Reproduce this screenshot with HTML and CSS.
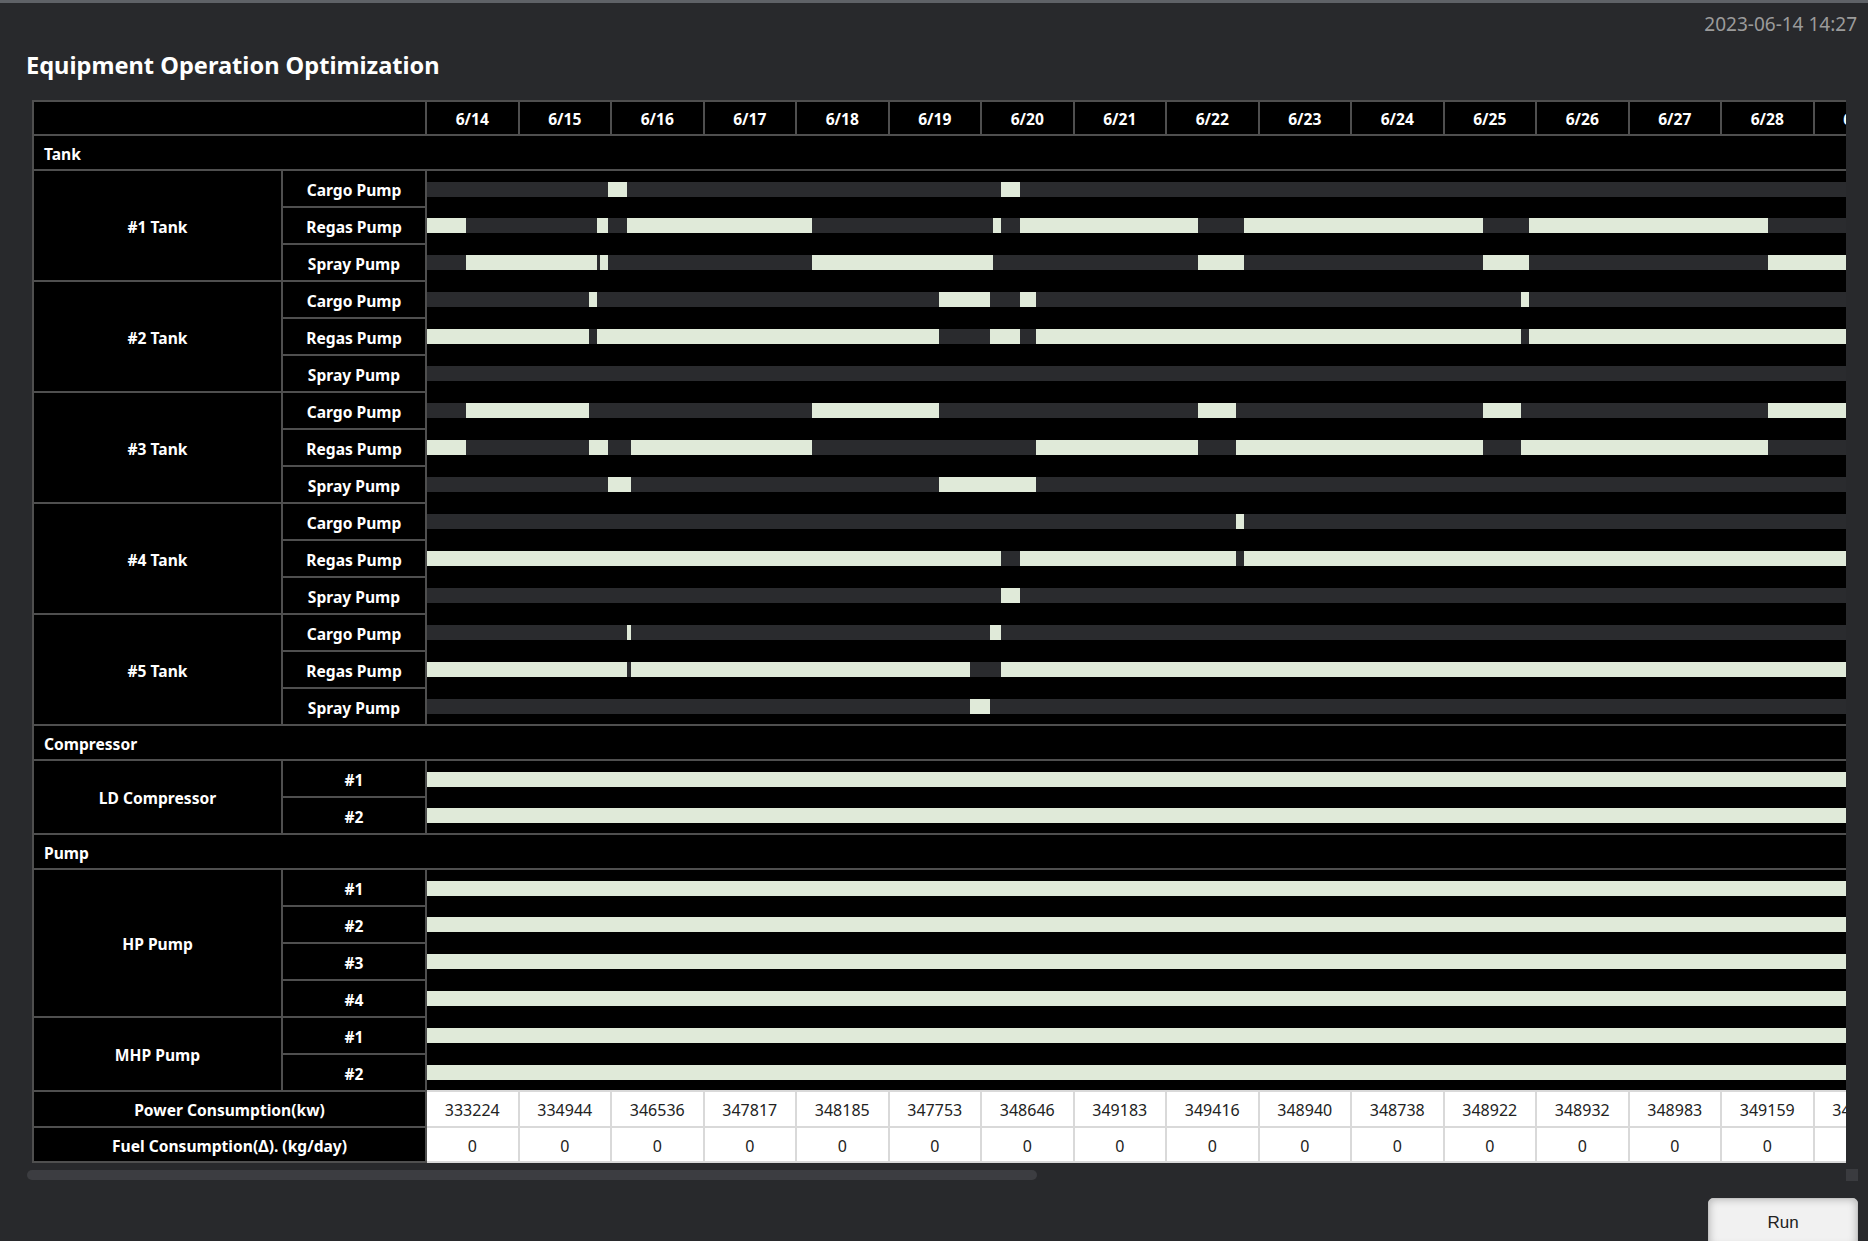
FILE: index.html
```html
<!DOCTYPE html>
<html lang="en">
<head>
<meta charset="utf-8">
<title>Equipment Operation Optimization</title>
<link rel="stylesheet" href="styles.css">
</head>
<body>
<div class="topbar"><span class="stamp">2023-06-14 14:27</span></div>
<h1 class="title">Equipment Operation Optimization</h1>
<div class="scroll">
<table class="grid">
<colgroup>
<col class="c-grp"><col class="c-sub">
<col class="c-day"><col class="c-day"><col class="c-day"><col class="c-day"><col class="c-day"><col class="c-day"><col class="c-day"><col class="c-day"><col class="c-day"><col class="c-day"><col class="c-day"><col class="c-day"><col class="c-day"><col class="c-day"><col class="c-day"><col class="c-day"><col class="c-day"><col class="c-day"><col class="c-day"><col class="c-day"><col class="c-day"><col class="c-day"><col class="c-day"><col class="c-day"><col class="c-day"><col class="c-day"><col class="c-day"><col class="c-day"><col class="c-day"><col class="c-day"><col class="c-day">
</colgroup>
<thead>
<tr class="r-head">
<th colspan="2"></th>
<th>6/14</th><th>6/15</th><th>6/16</th><th>6/17</th><th>6/18</th><th>6/19</th><th>6/20</th><th>6/21</th><th>6/22</th><th>6/23</th><th>6/24</th><th>6/25</th><th>6/26</th><th>6/27</th><th>6/28</th><th>6/29</th><th>6/30</th><th>7/1</th><th>7/2</th><th>7/3</th><th>7/4</th><th>7/5</th><th>7/6</th><th>7/7</th><th>7/8</th><th>7/9</th><th>7/10</th><th>7/11</th><th>7/12</th><th>7/13</th><th>7/14</th>
</tr>
</thead>
<tbody>
<tr class="r-sec"><th class="sec" colspan="33">Tank</th></tr>

<tr class="r-item">
<th class="grp" rowspan="3">#1 Tank</th><th class="sub">Cargo Pump</th>
<td class="tl" colspan="31"><div class="track"><span class="s" style="flex:47"></span><span class="s on" style="flex:5"></span><span class="s" style="flex:97"></span><span class="s on" style="flex:5"></span><span class="s" style="flex:590"></span></div></td>
</tr>
<tr class="r-item">
<th class="sub">Regas Pump</th>
<td class="tl" colspan="31"><div class="track"><span class="s on" style="flex:10"></span><span class="s" style="flex:34"></span><span class="s on" style="flex:3"></span><span class="s" style="flex:5"></span><span class="s on" style="flex:48"></span><span class="s" style="flex:47"></span><span class="s on" style="flex:2"></span><span class="s" style="flex:5"></span><span class="s on" style="flex:46"></span><span class="s" style="flex:12"></span><span class="s on" style="flex:62"></span><span class="s" style="flex:12"></span><span class="s on" style="flex:62"></span><span class="s" style="flex:24"></span><span class="s on" style="flex:62"></span><span class="s" style="flex:12"></span><span class="s on" style="flex:298"></span></div></td>
</tr>
<tr class="r-item">
<th class="sub">Spray Pump</th>
<td class="tl" colspan="31"><div class="track"><span class="s" style="flex:10"></span><span class="s on" style="flex:34"></span><span class="s" style="flex:1"></span><span class="s on" style="flex:2"></span><span class="s" style="flex:53"></span><span class="s on" style="flex:47"></span><span class="s" style="flex:53"></span><span class="s on" style="flex:12"></span><span class="s" style="flex:62"></span><span class="s on" style="flex:12"></span><span class="s" style="flex:62"></span><span class="s on" style="flex:24"></span><span class="s" style="flex:62"></span><span class="s on" style="flex:12"></span><span class="s" style="flex:298"></span></div></td>
</tr>

<tr class="r-item">
<th class="grp" rowspan="3">#2 Tank</th><th class="sub">Cargo Pump</th>
<td class="tl" colspan="31"><div class="track"><span class="s" style="flex:42"></span><span class="s on" style="flex:2"></span><span class="s" style="flex:89"></span><span class="s on" style="flex:13"></span><span class="s" style="flex:8"></span><span class="s on" style="flex:4"></span><span class="s" style="flex:126"></span><span class="s on" style="flex:2"></span><span class="s" style="flex:458"></span></div></td>
</tr>
<tr class="r-item">
<th class="sub">Regas Pump</th>
<td class="tl" colspan="31"><div class="track"><span class="s on" style="flex:42"></span><span class="s" style="flex:2"></span><span class="s on" style="flex:89"></span><span class="s" style="flex:13"></span><span class="s on" style="flex:8"></span><span class="s" style="flex:4"></span><span class="s on" style="flex:126"></span><span class="s" style="flex:2"></span><span class="s on" style="flex:458"></span></div></td>
</tr>
<tr class="r-item">
<th class="sub">Spray Pump</th>
<td class="tl" colspan="31"><div class="track"><span class="s" style="flex:744"></span></div></td>
</tr>

<tr class="r-item">
<th class="grp" rowspan="3">#3 Tank</th><th class="sub">Cargo Pump</th>
<td class="tl" colspan="31"><div class="track"><span class="s" style="flex:10"></span><span class="s on" style="flex:32"></span><span class="s" style="flex:58"></span><span class="s on" style="flex:33"></span><span class="s" style="flex:67"></span><span class="s on" style="flex:10"></span><span class="s" style="flex:64"></span><span class="s on" style="flex:10"></span><span class="s" style="flex:64"></span><span class="s on" style="flex:24"></span><span class="s" style="flex:62"></span><span class="s on" style="flex:12"></span><span class="s" style="flex:298"></span></div></td>
</tr>
<tr class="r-item">
<th class="sub">Regas Pump</th>
<td class="tl" colspan="31"><div class="track"><span class="s on" style="flex:10"></span><span class="s" style="flex:32"></span><span class="s on" style="flex:5"></span><span class="s" style="flex:6"></span><span class="s on" style="flex:47"></span><span class="s" style="flex:58"></span><span class="s on" style="flex:42"></span><span class="s" style="flex:10"></span><span class="s on" style="flex:64"></span><span class="s" style="flex:10"></span><span class="s on" style="flex:64"></span><span class="s" style="flex:24"></span><span class="s on" style="flex:62"></span><span class="s" style="flex:12"></span><span class="s on" style="flex:298"></span></div></td>
</tr>
<tr class="r-item">
<th class="sub">Spray Pump</th>
<td class="tl" colspan="31"><div class="track"><span class="s" style="flex:47"></span><span class="s on" style="flex:6"></span><span class="s" style="flex:80"></span><span class="s on" style="flex:25"></span><span class="s" style="flex:586"></span></div></td>
</tr>

<tr class="r-item">
<th class="grp" rowspan="3">#4 Tank</th><th class="sub">Cargo Pump</th>
<td class="tl" colspan="31"><div class="track"><span class="s" style="flex:210"></span><span class="s on" style="flex:2"></span><span class="s" style="flex:532"></span></div></td>
</tr>
<tr class="r-item">
<th class="sub">Regas Pump</th>
<td class="tl" colspan="31"><div class="track"><span class="s on" style="flex:149"></span><span class="s" style="flex:5"></span><span class="s on" style="flex:56"></span><span class="s" style="flex:2"></span><span class="s on" style="flex:532"></span></div></td>
</tr>
<tr class="r-item">
<th class="sub">Spray Pump</th>
<td class="tl" colspan="31"><div class="track"><span class="s" style="flex:149"></span><span class="s on" style="flex:5"></span><span class="s" style="flex:590"></span></div></td>
</tr>

<tr class="r-item">
<th class="grp" rowspan="3">#5 Tank</th><th class="sub">Cargo Pump</th>
<td class="tl" colspan="31"><div class="track"><span class="s" style="flex:52"></span><span class="s on" style="flex:1"></span><span class="s" style="flex:93"></span><span class="s on" style="flex:3"></span><span class="s" style="flex:595"></span></div></td>
</tr>
<tr class="r-item">
<th class="sub">Regas Pump</th>
<td class="tl" colspan="31"><div class="track"><span class="s on" style="flex:52"></span><span class="s" style="flex:1"></span><span class="s on" style="flex:88"></span><span class="s" style="flex:8"></span><span class="s on" style="flex:595"></span></div></td>
</tr>
<tr class="r-item">
<th class="sub">Spray Pump</th>
<td class="tl" colspan="31"><div class="track"><span class="s" style="flex:141"></span><span class="s on" style="flex:5"></span><span class="s" style="flex:598"></span></div></td>
</tr>

<tr class="r-sec"><th class="sec" colspan="33">Compressor</th></tr>
<tr class="r-item">
<th class="grp" rowspan="2">LD Compressor</th><th class="sub">#1</th>
<td class="tl" colspan="31"><div class="track full"></div></td>
</tr>
<tr class="r-item">
<th class="sub">#2</th>
<td class="tl" colspan="31"><div class="track full"></div></td>
</tr>

<tr class="r-sec"><th class="sec" colspan="33">Pump</th></tr>
<tr class="r-item">
<th class="grp" rowspan="4">HP Pump</th><th class="sub">#1</th>
<td class="tl" colspan="31"><div class="track full"></div></td>
</tr>
<tr class="r-item">
<th class="sub">#2</th>
<td class="tl" colspan="31"><div class="track full"></div></td>
</tr>
<tr class="r-item">
<th class="sub">#3</th>
<td class="tl" colspan="31"><div class="track full"></div></td>
</tr>
<tr class="r-item">
<th class="sub">#4</th>
<td class="tl" colspan="31"><div class="track full"></div></td>
</tr>
<tr class="r-item">
<th class="grp" rowspan="2">MHP Pump</th><th class="sub">#1</th>
<td class="tl" colspan="31"><div class="track full"></div></td>
</tr>
<tr class="r-item">
<th class="sub">#2</th>
<td class="tl" colspan="31"><div class="track full"></div></td>
</tr>

<tr class="r-pow">
<th class="tot" colspan="2">Power Consumption(kw)</th>
<td class="num">333224</td><td class="num">334944</td><td class="num">346536</td><td class="num">347817</td><td class="num">348185</td><td class="num">347753</td><td class="num">348646</td><td class="num">349183</td><td class="num">349416</td><td class="num">348940</td><td class="num">348738</td><td class="num">348922</td><td class="num">348932</td><td class="num">348983</td><td class="num">349159</td><td class="num">349207</td><td class="num">349318</td><td class="num">349402</td><td class="num">349455</td><td class="num">349512</td><td class="num">349566</td><td class="num">349603</td><td class="num">349671</td><td class="num">349702</td><td class="num">349755</td><td class="num">349801</td><td class="num">349846</td><td class="num">349887</td><td class="num">349912</td><td class="num">349958</td><td class="num">350011</td>
</tr>
<tr class="r-fuel">
<th class="tot" colspan="2">Fuel Consumption(Δ). (kg/day)</th>
<td class="num">0</td><td class="num">0</td><td class="num">0</td><td class="num">0</td><td class="num">0</td><td class="num">0</td><td class="num">0</td><td class="num">0</td><td class="num">0</td><td class="num">0</td><td class="num">0</td><td class="num">0</td><td class="num">0</td><td class="num">0</td><td class="num">0</td><td class="num">0</td><td class="num">0</td><td class="num">0</td><td class="num">0</td><td class="num">0</td><td class="num">0</td><td class="num">0</td><td class="num">0</td><td class="num">0</td><td class="num">0</td><td class="num">0</td><td class="num">0</td><td class="num">0</td><td class="num">0</td><td class="num">0</td><td class="num">0</td>
</tr>
</tbody>
</table>
</div>
<div class="hscroll">
<div class="hscroll-track"><div class="hscroll-thumb"></div></div>
<div class="hscroll-corner"></div>
</div>
<div class="actions"><button class="run" type="button">Run</button></div>
</body>
</html>
```

FILE: styles.css
```css
* { box-sizing: border-box; }

html, body { margin: 0; padding: 0; }

body {
  background: #28292c;
  border-top: 3px solid #5f6267;
  font-family: "Noto Sans", "Open Sans", sans-serif;
  color: #ffffff;
  height: 100vh;
  overflow: hidden;
}

.topbar {
  display: flex;
  justify-content: flex-end;
  padding: 9px 11px 0 0;
}

.stamp {
  font-size: 19px;
  line-height: 24px;
  color: #9b9b9b;
}

.title {
  margin: 13px 0 0 26px;
  font-size: 23.6px;
  line-height: 32px;
  font-weight: 700;
  color: #ffffff;
}

.scroll {
  margin: 19px 0 0 26px;
  width: 1820px;
  overflow: hidden;
}

.grid {
  border-collapse: collapse;
  table-layout: fixed;
  width: 3262px;
  margin: 0 0 6px 6px;
  background: #000000;
}

.c-grp { width: 249px; }
.c-sub { width: 144px; }
.c-day { width: 92.5px; }

.grid th {
  border: 2px solid #4f4f4f;
  padding: 2px 0 0;
  font-size: 15.6px;
  font-weight: 700;
  color: #ffffff;
  text-align: center;
  vertical-align: middle;
  white-space: nowrap;
  overflow: hidden;
}

.r-head { height: 34px; }
.r-sec { height: 35px; }
.r-item { height: 37px; }
.r-pow { height: 36px; }
.r-fuel { height: 35px; }

.grid th.sec {
  text-align: left;
  padding-left: 10px;
}

.grid td.tl {
  border: 0 none;
  padding: 0;
  vertical-align: middle;
}

.track {
  display: flex;
  height: 15px;
  background: #2a2b2e;
}

.track.full { background: #e0ead9; }

.s {
  display: block;
  min-width: 0;
  height: 100%;
}

.s.on { background: #e0ead9; }

.grid td.num {
  background: #ffffff;
  color: #222222;
  border: 2px solid #d9d9d9;
  padding: 2px 0 0;
  font-size: 16px;
  text-align: center;
  vertical-align: middle;
  white-space: nowrap;
  overflow: hidden;
}

.hscroll {
  display: flex;
  height: 12px;
  margin-left: 26px;
  width: 1832px;
}

.hscroll-track {
  flex: 1;
  padding: 1px;
}

.hscroll-thumb {
  width: 1010px;
  height: 10px;
  border-radius: 5px;
  background: #3c3d41;
}

.hscroll-corner {
  width: 12px;
  height: 12px;
  background: #3a3b3f;
}

.actions {
  display: flex;
  justify-content: flex-end;
  padding: 17px 10px 0 0;
}

.run {
  width: 150px;
  height: 50px;
  border: 1px solid #c4c4c4;
  border-radius: 5px;
  background: #f1f1f1;
  box-shadow: inset 0 0 9px rgba(0, 0, 0, 0.28);
  font-family: "Liberation Sans", Arial, sans-serif;
  font-size: 17px;
  color: #222222;
  padding: 0;
}
```
